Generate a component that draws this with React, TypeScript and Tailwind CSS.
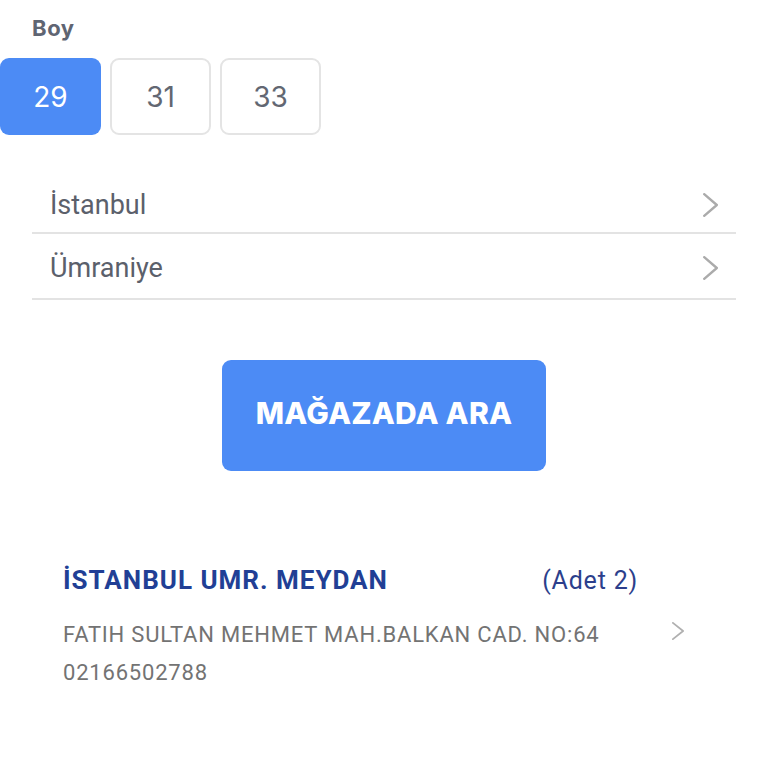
const sizes = ["29", "31", "33"];

function Chevron({ w, h, stroke }: { w: number; h: number; stroke: number }) {
  return (
    <svg width={w} height={h} viewBox={`0 0 ${w} ${h}`} fill="none">
      <polyline
        points={`${stroke / 2},${stroke / 2} ${w - stroke / 2},${h / 2} ${stroke / 2},${h - stroke / 2}`}
        stroke="currentColor"
        strokeWidth={stroke}
        strokeLinecap="round"
        strokeLinejoin="round"
      />
    </svg>
  );
}

export default function App() {
  const selected = "29";

  return (
    <div className="w-[768px] h-[768px] bg-white overflow-hidden font-['Inter',sans-serif]">
      <div className="pt-[14px]">
        <p className="ml-8 text-[22px] font-bold text-[#5f6572] leading-[28px] tracking-[0.6px]">Boy</p>

        <div className="flex gap-[9px] mt-[16px]">
          {sizes.map((s) => (
            <button
              key={s}
              type="button"
              className={`w-[101px] h-[77px] rounded-[9px] text-[28px] flex items-center justify-center ${
                s === selected
                  ? "bg-[#4c8bf5] text-white"
                  : "bg-white border-2 border-[#e4e4e4] text-[#626772]"
              }`}
            >
              {s}
            </button>
          ))}
        </div>
      </div>

      <div className="mx-8 mt-[37px] font-['Roboto',sans-serif]">
        {["İstanbul", "Ümraniye"].map((city, i) => (
          <div
            key={city}
            className={`flex items-center justify-between pl-[18px] pr-[18px] border-b-2 border-[#e3e3e3] ${
              i === 0 ? "h-[62px] pt-[6px]" : "h-[66px] pt-[4px]"
            }`}
          >
            <span className="text-[27px] text-[#5b606b]">{city}</span>
            <span className="text-[#ababab]">
              <Chevron w={15} h={24} stroke={2.4} />
            </span>
          </div>
        ))}
      </div>

      <div className="flex justify-center mt-[60px]">
        <button
          type="button"
          className="w-[324px] h-[111px] rounded-[9px] bg-[#4c8bf5] text-white text-[30px] font-extrabold tracking-[0.2px] pb-[4px]"
        >
          MAĞAZADA ARA
        </button>
      </div>

      <div className="ml-[63px] mr-[80px] mt-[90px]">
        <div className="flex items-center justify-between font-['Roboto',sans-serif] pr-[50px]">
          <span className="text-[26px] font-bold text-[#213f95] tracking-[1px]">İSTANBUL UMR. MEYDAN</span>
          <span className="text-[25px] text-[#2c3f8c] tracking-[0.8px]">(Adet 2)</span>
        </div>
        <div className="flex items-start justify-between mt-[16px]">
          <div className="text-[22px] text-[#737373] leading-[38px] tracking-[0.8px] font-['Roboto',sans-serif]">
            <p>FATIH SULTAN MEHMET MAH.BALKAN CAD. NO:64</p>
            <p>02166502788</p>
          </div>
          <span className="text-[#b0b0b0] mt-[6px] mr-[4px]">
            <Chevron w={12} h={18} stroke={1.8} />
          </span>
        </div>
      </div>
    </div>
  );
}
